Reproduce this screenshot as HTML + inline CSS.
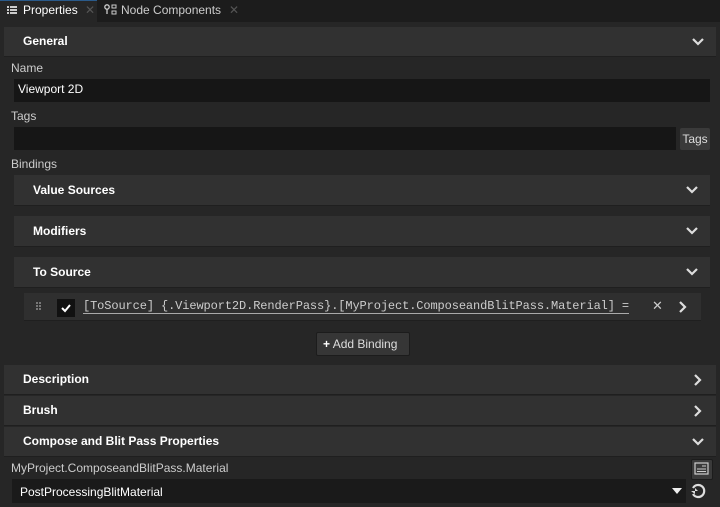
<!DOCTYPE html>
<html><head><meta charset="utf-8"><style>
*{box-sizing:border-box;margin:0;padding:0}
body{width:720px;height:507px;background:#262626;font-family:"Liberation Sans",sans-serif;font-size:12px;color:#ddd;position:relative;overflow:hidden}
.a{position:absolute}
.tabs{left:0;top:0;width:720px;height:22px;background:#1c1c1c}
.hdr{position:absolute;background:#313131;border-bottom:1px solid #1f1f1f;font-weight:bold;color:#fff;font-size:12px;padding-left:19px;line-height:29px}
.chev{position:absolute;right:12px;top:9px;width:12px;height:12px}
.lbl{position:absolute;color:#ccc;font-size:12px}
.inp{position:absolute;background:#161616}
</style></head><body>
<div class="a tabs"></div>
<div class="a" style="left:0;top:0;width:97px;height:22px;background:#262626;border-top:1px solid #2a5a8a"></div>
<svg class="a" style="left:7px;top:5px" width="10" height="10"><g fill="#ccc"><rect x="0" y="1" width="2" height="2"/><rect x="3" y="1" width="7" height="2"/><rect x="0" y="4" width="2" height="2"/><rect x="3" y="4" width="7" height="2"/><rect x="0" y="7" width="2" height="2"/><rect x="3" y="7" width="7" height="2"/></g></svg>
<div class="a" style="left:23px;top:3px;color:#fff;font-size:12px">Properties</div>
<div class="a" style="left:85px;top:3px;color:#555;font-size:12px">✕</div>
<svg class="a" style="left:104px;top:4px" width="14" height="12"><circle cx="3" cy="3" r="2.2" fill="none" stroke="#ccc" stroke-width="1.3"/><line x1="3" y1="5" x2="3" y2="10" stroke="#ccc" stroke-width="1.3"/><rect x="8" y="1" width="4" height="3" fill="none" stroke="#ccc"/><rect x="8" y="7" width="4" height="3" fill="none" stroke="#ccc"/></svg>
<div class="a" style="left:121px;top:3px;color:#ccc;font-size:12px">Node Components</div>
<div class="a" style="left:229px;top:3px;color:#555;font-size:12px">✕</div>

<div class="hdr" style="left:4px;top:27px;width:712px;height:30px">General<svg class="chev" viewBox="0 0 12 12"><path d="M1 3l5 5 5-5" stroke="#ddd" stroke-width="2.2" fill="none"/></svg></div>
<div class="lbl" style="left:11px;top:61px">Name</div>
<div class="inp" style="left:14px;top:79px;width:696px;height:23px"></div>
<div class="a" style="left:18px;top:82px;color:#fff">Viewport 2D</div>
<div class="lbl" style="left:11px;top:109px">Tags</div>
<div class="inp" style="left:14px;top:127px;width:662px;height:23px"></div>
<div class="a" style="left:680px;top:128px;width:30px;height:22px;background:#3a3a3a;border-radius:2px;color:#ddd;text-align:center;line-height:22px">Tags</div>
<div class="lbl" style="left:11px;top:157px">Bindings</div>

<div class="hdr" style="left:14px;top:175px;width:696px;height:31px;line-height:31px">Value Sources<svg class="chev" viewBox="0 0 12 12"><path d="M1 3l5 5 5-5" stroke="#ddd" stroke-width="2.2" fill="none"/></svg></div>
<div class="hdr" style="left:14px;top:216px;width:696px;height:31px;line-height:31px">Modifiers<svg class="chev" viewBox="0 0 12 12"><path d="M1 3l5 5 5-5" stroke="#ddd" stroke-width="2.2" fill="none"/></svg></div>
<div class="hdr" style="left:14px;top:257px;width:696px;height:31px;line-height:31px">To Source<svg class="chev" viewBox="0 0 12 12"><path d="M1 3l5 5 5-5" stroke="#ddd" stroke-width="2.2" fill="none"/></svg></div>

<div class="a" style="left:24px;top:293px;width:677px;height:28px;background:#2f2f2f;border-bottom:1px solid #1f1f1f"></div>
<svg class="a" style="left:36px;top:302px" width="6" height="9"><g fill="#777"><rect x="0" y="0" width="2" height="2"/><rect x="3" y="0" width="2" height="2"/><rect x="0" y="3" width="2" height="2"/><rect x="3" y="3" width="2" height="2"/><rect x="0" y="6" width="2" height="2"/><rect x="3" y="6" width="2" height="2"/></g></svg>
<div class="a" style="left:57px;top:299px;width:18px;height:18px;background:#111"></div>
<svg class="a" style="left:60px;top:302px" width="12" height="12"><path d="M2 6l3 3 5-6" stroke="#fff" stroke-width="2" fill="none"/></svg>
<div class="a" style="left:83px;top:299px;font-family:'Liberation Mono',monospace;font-size:12px;letter-spacing:-0.11px;color:#ccc;border-bottom:1px solid #aaa;white-space:nowrap;line-height:14px">[ToSource] {.Viewport2D.RenderPass}.[MyProject.ComposeandBlitPass.Material] =</div>
<div class="a" style="left:652px;top:298px;color:#ccc;font-size:13px">✕</div>
<svg class="a" style="left:678px;top:300px" width="10" height="14"><path d="M2 2l5 5-5 5" stroke="#ddd" stroke-width="2.2" fill="none"/></svg>

<div class="a" style="left:316px;top:332px;width:94px;height:24px;background:#363636;border:1px solid #1c1c1c;border-radius:2px;color:#ddd;line-height:22px;padding-left:6px"><b style="color:#fff">+</b> Add Binding</div>

<div class="hdr" style="left:4px;top:365px;width:712px;height:30px">Description<svg class="chev" viewBox="0 0 12 12"><path d="M3 1l5 5-5 5" stroke="#ddd" stroke-width="2.2" fill="none"/></svg></div>
<div class="hdr" style="left:4px;top:396px;width:712px;height:30px">Brush<svg class="chev" viewBox="0 0 12 12"><path d="M3 1l5 5-5 5" stroke="#ddd" stroke-width="2.2" fill="none"/></svg></div>
<div class="hdr" style="left:4px;top:427px;width:712px;height:30px">Compose and Blit Pass Properties<svg class="chev" viewBox="0 0 12 12"><path d="M1 3l5 5 5-5" stroke="#ddd" stroke-width="2.2" fill="none"/></svg></div>

<div class="lbl" style="left:11px;top:461px">MyProject.ComposeandBlitPass.Material</div>
<div class="a" style="left:691px;top:459px;width:22px;height:21px;background:#3a3a3a;border:1px solid #1c1c1c;border-radius:2px"></div>
<svg class="a" style="left:694px;top:462px" width="16" height="14"><rect x="1" y="1" width="13" height="11" fill="none" stroke="#ccc" stroke-width="1.2"/><line x1="8" y1="4" x2="12" y2="4" stroke="#ccc"/><line x1="3" y1="7" x2="12" y2="7" stroke="#ccc"/><line x1="3" y1="9.5" x2="12" y2="9.5" stroke="#ccc"/></svg>
<div class="inp" style="left:12px;top:479px;width:674px;height:24px;background:#1a1a1a"></div>
<div class="a" style="left:20px;top:485px;color:#fff">PostProcessingBlitMaterial</div>
<svg class="a" style="left:672px;top:488px" width="10" height="6"><path d="M0 0h10l-5 6z" fill="#eee"/></svg>
<svg class="a" style="left:690px;top:483px" width="16" height="16"><path d="M3 5A6 6 0 1 1 3 11" stroke="#ddd" stroke-width="2.2" fill="none"/><path d="M1 8h7l-3-3v6z" fill="#ddd"/></svg>
</body></html>
